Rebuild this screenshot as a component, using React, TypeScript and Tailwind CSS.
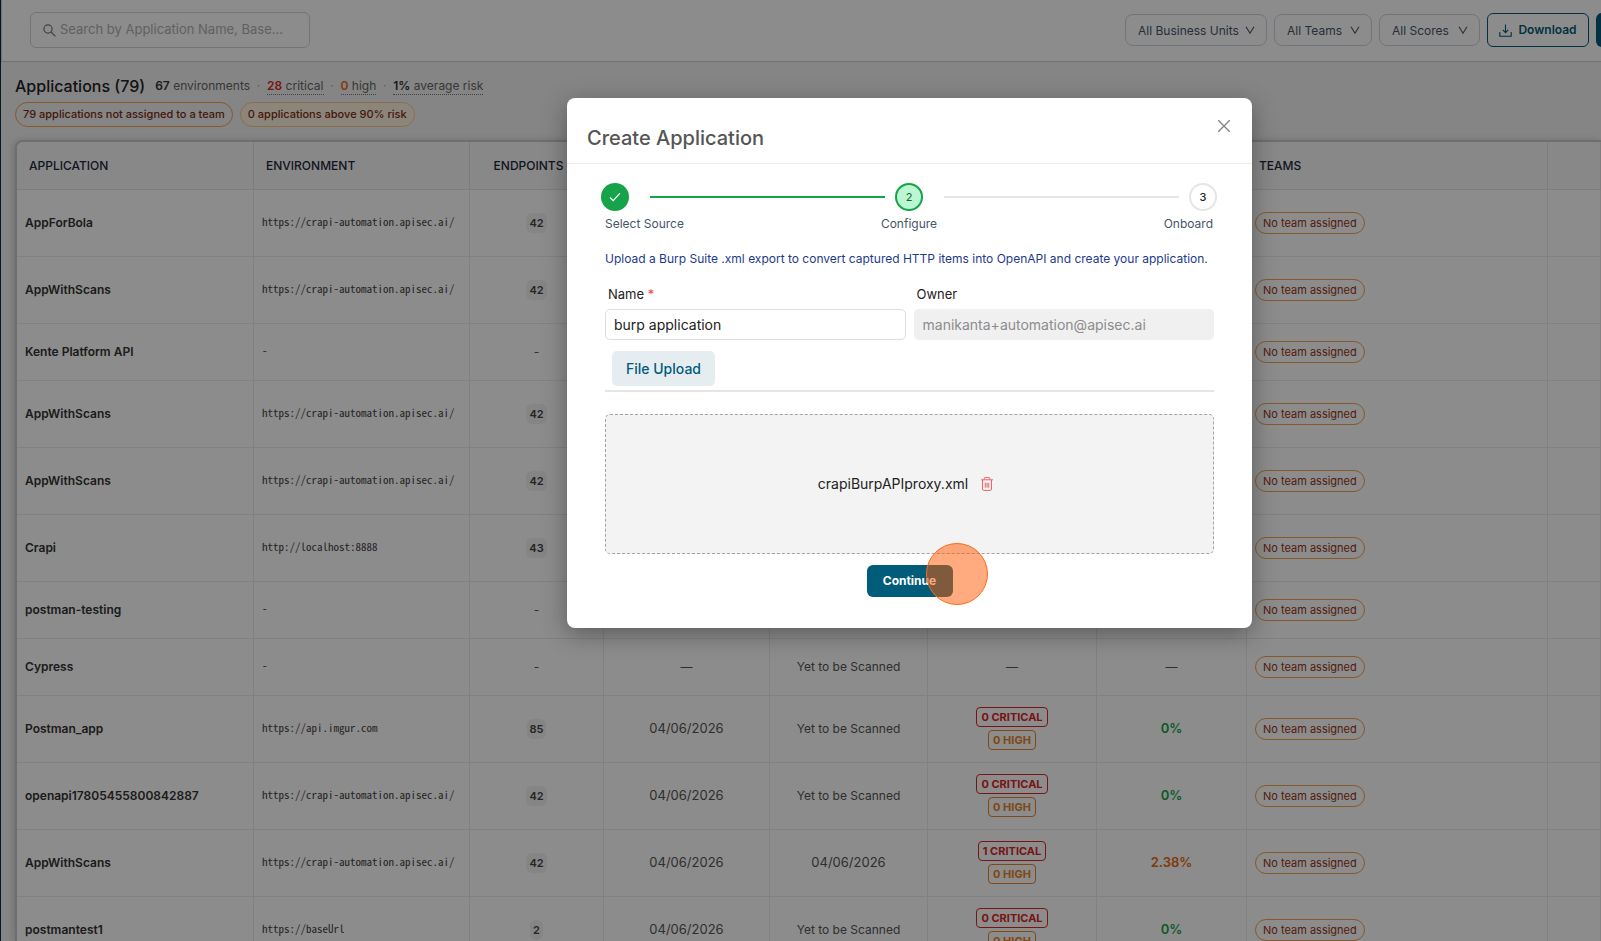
import React, { useState } from 'react';
import clsx from 'clsx';

type AppRow = {
  name: string;
  env: string;
  endpoints: number | null;
  created: string;
  scanned: string;
  critical: number | null;
  risk: string | null;
};

const CRAPI = 'https://crapi-automation.apisec.ai/';
const NOT_SCANNED = 'Yet to be Scanned';

const rows: AppRow[] = [
  { name: 'AppForBola', env: CRAPI, endpoints: 42, created: '04/06/2026', scanned: NOT_SCANNED, critical: 0, risk: '0%' },
  { name: 'AppWithScans', env: CRAPI, endpoints: 42, created: '04/06/2026', scanned: NOT_SCANNED, critical: 0, risk: '0%' },
  { name: 'Kente Platform API', env: '-', endpoints: null, created: '—', scanned: NOT_SCANNED, critical: null, risk: null },
  { name: 'AppWithScans', env: CRAPI, endpoints: 42, created: '04/06/2026', scanned: NOT_SCANNED, critical: 0, risk: '0%' },
  { name: 'AppWithScans', env: CRAPI, endpoints: 42, created: '04/06/2026', scanned: NOT_SCANNED, critical: 0, risk: '0%' },
  { name: 'Crapi', env: 'http://localhost:8888', endpoints: 43, created: '04/06/2026', scanned: NOT_SCANNED, critical: 0, risk: '0%' },
  { name: 'postman-testing', env: '-', endpoints: null, created: '—', scanned: NOT_SCANNED, critical: null, risk: null },
  { name: 'Cypress', env: '-', endpoints: null, created: '—', scanned: NOT_SCANNED, critical: null, risk: null },
  { name: 'Postman_app', env: 'https://api.imgur.com', endpoints: 85, created: '04/06/2026', scanned: NOT_SCANNED, critical: 0, risk: '0%' },
  { name: 'openapi17805455800842887', env: CRAPI, endpoints: 42, created: '04/06/2026', scanned: NOT_SCANNED, critical: 0, risk: '0%' },
  { name: 'AppWithScans', env: CRAPI, endpoints: 42, created: '04/06/2026', scanned: '04/06/2026', critical: 1, risk: '2.38%' },
  { name: 'postmantest1', env: 'https://baseUrl', endpoints: 2, created: '04/06/2026', scanned: NOT_SCANNED, critical: 0, risk: '0%' },
];

const filters = [
  { label: 'All Business Units', width: 'w-[142px]' },
  { label: 'All Teams', width: 'w-[98px]' },
  { label: 'All Scores', width: 'w-[101px]' },
];

const SearchIcon = () => (
  <svg className="h-[13px] w-[13px] shrink-0" viewBox="0 0 14 14" fill="none" stroke="#777" strokeWidth="1.3">
    <circle cx="5.4" cy="5.4" r="4.4" />
    <path d="M8.6 8.6 13.4 13.4" />
  </svg>
);

const ChevronIcon = () => (
  <svg
    className="pointer-events-none absolute top-1/2 right-3 h-[10px] w-[10px] -translate-y-1/2"
    viewBox="0 0 10 10"
    fill="none"
    stroke="#475569"
    strokeWidth="1.1"
  >
    <path d="M1 1.8 5 8.2 9 1.8" />
  </svg>
);

const DownloadIcon = () => (
  <svg className="h-[13px] w-[13px]" viewBox="0 0 13 13" fill="none" stroke="currentColor" strokeWidth="1.1">
    <path d="M6.5 0.5v8M3.8 5.9l2.7 2.7 2.7-2.7M0.8 8v4.2h11.4V8" />
  </svg>
);

const TrashIcon = () => (
  <svg className="h-[14px] w-3" viewBox="0 0 12 14" fill="none" stroke="#f05252" strokeWidth="0.9">
    <path d="M0 2.8h12M3.2 2.6V1.4c0-.5.3-.8.8-.8h4c.5 0 .8.3.8.8v1.2M1.5 3v9.2c0 .7.5 1.2 1.2 1.2h6.6c.7 0 1.2-.5 1.2-1.2V3M4.3 5.8v4.8M6 5.8v4.8M7.7 5.8v4.8" />
  </svg>
);

const TopBar: React.FC = () => (
  <header className="flex h-[62px] shrink-0 items-start overflow-hidden border-b border-l border-[#d0d0d0] bg-white pt-3 pl-7">
    <label className="flex h-9 w-[280px] shrink-0 items-center gap-1 rounded-md border border-[#d4d4d4] px-3">
      <SearchIcon />
      <input
        type="search"
        aria-label="Search applications"
        placeholder="Search by Application Name, Base …"
        className="w-full min-w-0 bg-transparent text-[13px] text-ellipsis text-gray-700 outline-none placeholder:text-[#b0b0b0]"
      />
    </label>
    <div className="mt-px ml-auto flex shrink-0 items-center gap-[7px]">
      {filters.map(({ label, width }) => (
        <div key={label} className={clsx('relative', width)}>
          <select
            aria-label={label}
            className="block h-8 w-full appearance-none rounded-lg border border-[#cbd5e1] bg-white pt-[2px] pl-3 text-xs text-[#475569]"
          >
            <option>{label}</option>
          </select>
          <ChevronIcon />
        </div>
      ))}
      <button className="flex h-[34px] w-[102px] items-center justify-center gap-[6px] rounded-md border border-[#015c7a] text-xs font-semibold text-[#015c7a]">
        <DownloadIcon />
        Download
      </button>
      <button aria-label="Add application" className="-mr-[102px] h-[34px] w-[107px] rounded-md bg-[#015c7a]" />
    </div>
  </header>
);

const Summary: React.FC = () => (
  <section className="px-[14px] pt-[10px]">
    <div className="flex h-7 items-center text-xs text-[#666]">
      <h1 className="mr-[10px] text-base font-medium text-[#222]">Applications (79)</h1>
      <span>
        <b className="font-semibold text-[#333]">67</b> environments
      </span>
      <span className="w-[17px] text-center text-[#aaa]">·</span>
      <a href="#critical" className="border-b border-dotted border-[#777]">
        <b className="font-semibold text-[#dc2626]">28</b> critical
      </a>
      <span className="w-[17px] text-center text-[#aaa]">·</span>
      <a href="#high" className="border-b border-dotted border-[#777]">
        <b className="font-semibold text-[#ea6a0c]">0</b> high
      </a>
      <span className="w-[17px] text-center text-[#aaa]">·</span>
      <a href="#risk" className="border-b border-dotted border-[#777]">
        <b className="font-semibold text-[#333]">1%</b> average risk
      </a>
    </div>
    <div className="mt-[2px] flex gap-[7px] text-[11px] font-medium text-[#7c2d12]">
      <button className="h-[25px] rounded-full border border-[#f5a04c] px-[7px]">79 applications not assigned to a team</button>
      <button className="h-[25px] rounded-full border border-[#fcc98a] bg-[#fff3e0] px-[7px]">0 applications above 90% risk</button>
    </div>
  </section>
);

const headers = ['APPLICATION', 'ENVIRONMENT', 'ENDPOINTS', 'CREATED', 'LAST SCANNED', 'FINDINGS', 'RISK', 'TEAMS', ''];

const ApplicationsTable: React.FC = () => (
  <div className="mt-[13px] ml-[14px] min-h-0 flex-1 overflow-hidden rounded-tl-lg border-t-2 border-l-2 border-[#c8c8c8] bg-white shadow-[-2px_0_6px_rgba(0,0,0,0.15)]">
    <table className="w-full table-fixed border-separate border-spacing-0 text-xs text-[#555]">
      <colgroup>
        <col className="w-[237px]" />
        <col className="w-[216px]" />
        <col className="w-[134px]" />
        <col className="w-[166px]" />
        <col className="w-[158px]" />
        <col className="w-[169px]" />
        <col className="w-[150px]" />
        <col className="w-[301px]" />
        <col />
      </colgroup>
      <thead>
        <tr className="h-12 bg-[#f8f8f8] text-[#1e293b]">
          {headers.map((header, i) => (
            <th
              key={i}
              className={clsx(
                'border-r border-b border-[#e4e4e4] pl-3 text-xs font-medium',
                i > 1 && i < 7 ? 'pr-7 text-center' : 'pr-3 text-left'
              )}
            >
              {header}
            </th>
          ))}
        </tr>
      </thead>
      <tbody>
        {rows.map((row, i) => (
          <tr
            key={i}
            className={clsx(
              row.endpoints === null ? 'h-[57px]' : 'h-[67px]',
              '[&>td]:border-r [&>td]:border-b [&>td]:border-[#ebebeb] [&>td]:px-2'
            )}
          >
            <td className="font-semibold text-[#333]">{row.name}</td>
            <td className="pb-1 font-['Noto_Sans_Mono_CJK_SC','Liberation_Mono',monospace] text-[11px] text-[#444]">{row.env}</td>
            <td className="text-center">
              {row.endpoints === null ? (
                '-'
              ) : (
                <span className="inline-block rounded-md bg-[#f2f2f2] px-[3px] text-[11px] leading-5 font-semibold text-[#444]">
                  {row.endpoints}
                </span>
              )}
            </td>
            <td className={clsx('text-center', row.created !== '—' && 'text-[13px]')}>{row.created}</td>
            <td className={clsx('text-center', row.scanned !== NOT_SCANNED && 'text-[13px]')}>{row.scanned}</td>
            <td>
              {row.critical === null ? (
                <div className="text-center">—</div>
              ) : (
                <div className="flex flex-col items-center gap-[3px] pb-[2px] text-[11px] leading-[18px] font-bold">
                  <span className="rounded border border-[#dc2626] px-1 text-[#dc2626]">{row.critical} CRITICAL</span>
                  <span className="rounded border border-[#e6842a] px-1 text-[#e6842a]">0 HIGH</span>
                </div>
              )}
            </td>
            <td className="text-center">
              {row.risk === null ? (
                '—'
              ) : (
                <span className={clsx('text-[13px] font-semibold', row.risk === '0%' ? 'text-[#16a34a]' : 'text-[#ea6a0c]')}>
                  {row.risk}
                </span>
              )}
            </td>
            <td>
              <span className="inline-block rounded-full border border-[#f5a04c] px-[7px] text-[11px] leading-5 text-[#9a3412]">
                No team assigned
              </span>
            </td>
            <td />
          </tr>
        ))}
      </tbody>
    </table>
  </div>
);

const Stepper: React.FC = () => (
  <div className="pt-[19px] pr-[35px] pl-[34px] text-xs text-[#475569]">
    <div className="flex items-center">
      <span className="flex h-7 w-7 items-center justify-center rounded-full bg-[#16a34a]">
        <svg className="h-3 w-3" viewBox="0 0 12 12" fill="none" stroke="#fff" strokeWidth="1.2">
          <path d="M1 6.5 4.2 9.6 11 2.2" />
        </svg>
      </span>
      <span className="mr-[10px] ml-[21px] h-[2px] flex-1 bg-[#16a34a]" />
      <span className="flex h-7 w-7 items-center justify-center rounded-full border-2 border-[#16a34a] bg-[#bbf7d0] text-[11px] text-[#166534]">
        2
      </span>
      <span className="mr-[10px] ml-[21px] h-[2px] flex-1 bg-[#e5e5e5]" />
      <span className="flex h-7 w-7 items-center justify-center rounded-full border-2 border-[#e5e5e5] text-[11px] font-medium text-[#222]">
        3
      </span>
    </div>
    <div className="mt-[3px] grid grid-cols-3 px-1 leading-5">
      <span>Select Source</span>
      <span className="text-center">Configure</span>
      <span className="text-right">Onboard</span>
    </div>
  </div>
);

const CreateApplicationModal: React.FC = () => {
  const [name, setName] = useState('burp application');
  const [fileName, setFileName] = useState('crapiBurpAPIproxy.xml');

  return (
    <div
      role="dialog"
      aria-labelledby="modal-title"
      className="w-[685px] rounded-lg bg-white pb-[31px] text-[#222] shadow-[0_6px_24px_rgba(0,0,0,0.35)]"
    >
      <div className="flex h-[66px] items-start justify-between border-b border-[#ebebeb] pr-[22px] pl-5">
        <h2 id="modal-title" className="pt-6 text-xl leading-8 font-medium text-[#555]">
          Create Application
        </h2>
        <button aria-label="Close" className="mt-[22px]">
          <svg className="h-3 w-3" viewBox="0 0 12 12" fill="none" stroke="#888" strokeWidth="1.4">
            <path d="M0 0 12 12M12 0 0 12" />
          </svg>
        </button>
      </div>

      <Stepper />

      <div className="px-[38px]">
        <p className="mt-[15px] text-xs leading-5 text-[#1e3a8a]">
          Upload a Burp Suite .xml export to convert captured HTTP items into OpenAPI and create your application.
        </p>

        <div className="mt-[15px] grid grid-cols-2 gap-2">
          <div>
            <label htmlFor="app-name" className="ml-[3px] block text-[13px] leading-5">
              Name <span className="text-[#ef4444]">*</span>
            </label>
            <input
              id="app-name"
              value={name}
              onChange={(e) => setName(e.target.value)}
              className="mt-[5px] h-[31px] w-full rounded-[5px] border border-[#dedede] px-2 text-sm outline-none"
            />
          </div>
          <div>
            <label htmlFor="app-owner" className="ml-[3px] block text-[13px] leading-5">
              Owner
            </label>
            <input
              id="app-owner"
              value="manikanta+automation@apisec.ai"
              readOnly
              className="mt-[5px] h-[31px] w-full rounded-[5px] bg-[#f0f0f0] px-[9px] text-sm text-[#8c8c8c] outline-none"
            />
          </div>
        </div>

        <div className="mt-[11px] border-b-2 border-[#e5e5e5] px-[7px] pb-1">
          <button className="h-[35px] w-[103px] rounded-[5px] bg-[#e6edf1] text-sm font-medium text-[#015c7a]">File Upload</button>
        </div>

        <div className="mt-[22px] flex h-[140px] items-center justify-center gap-[13px] rounded-[5px] border border-dashed border-[#a3a3a3] bg-[#f3f3f3] pr-2 text-sm">
          {fileName && (
            <>
              <span>{fileName}</span>
              <button aria-label="Remove file" onClick={() => setFileName('')}>
                <TrashIcon />
              </button>
            </>
          )}
        </div>

        <div className="mt-[11px] flex justify-center">
          <div className="relative">
            <button className="block h-8 w-[86px] rounded-md bg-[#015c7a] text-xs font-bold text-white">Continue</button>
            <span className="pointer-events-none absolute -top-[22px] left-[59px] h-[62px] w-[62px] rounded-full border border-[#ff6a1a] bg-[#ff5700]/50" />
          </div>
        </div>
      </div>
    </div>
  );
};

export default function App() {
  return (
    <div className="relative flex h-screen overflow-hidden bg-[#f2f2f2] font-[Inter,sans-serif]">
      <div className="w-px shrink-0 bg-[#0f2a43]" />
      <main className="flex min-w-0 flex-1 flex-col">
        <TopBar />
        <Summary />
        <ApplicationsTable />
      </main>
      <div className="absolute inset-0 flex items-start justify-center bg-black/45 pt-[98px] pl-[218px]">
        <CreateApplicationModal />
      </div>
    </div>
  );
}
